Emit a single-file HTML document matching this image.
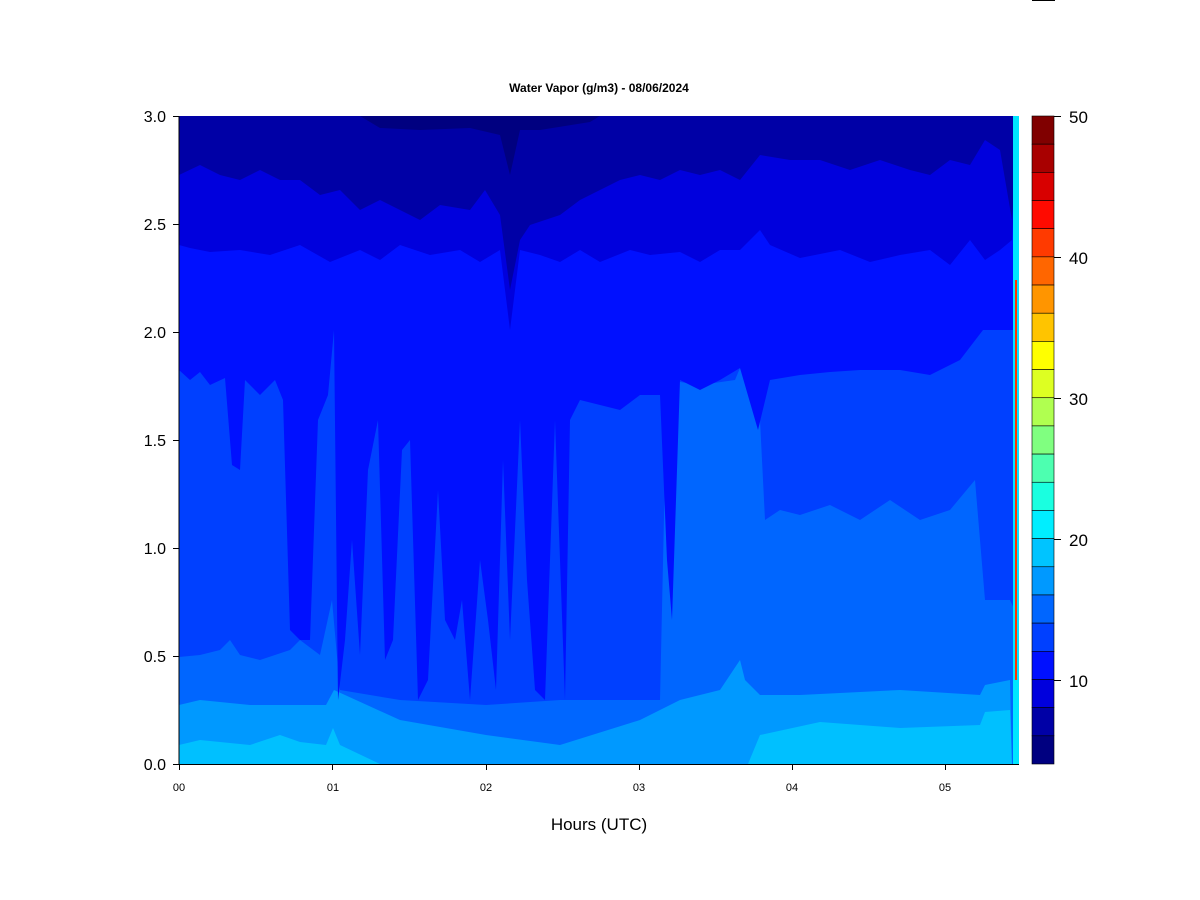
<!DOCTYPE html>
<html><head><style>
body{margin:0;background:#fff;width:1200px;height:900px;overflow:hidden}
svg{position:absolute;left:0;top:0}
</style></head><body>
<svg width="1200" height="900" xmlns="http://www.w3.org/2000/svg" font-family="Liberation Sans, sans-serif">
<rect x="1032" y="0" width="23" height="1" fill="#000"/>
<text x="599" y="92" text-anchor="middle" font-size="12" font-weight="bold">Water Vapor (g/m3) - 08/06/2024</text>
<clipPath id="c"><rect x="179" y="116" width="840" height="648"/></clipPath>
<g clip-path="url(#c)">
<rect x="179" y="116" width="840" height="648" fill="#00C0FF"/>
<polygon fill="#0099FF" points="179,116 1019,116 1019,764 1012,764 1010,710 985,712 980,725 900,728 820,722 760,735 748,764 380,764 340,745 333,728 326,745 300,742 280,735 250,745 200,740 179,745"/>
<polygon fill="#0066FF" points="179,116 1019,116 1019,764 1012,764 1010,680 985,685 980,695 900,690 800,695 760,695 745,680 740,660 720,690 680,700 640,720 560,745 486,735 400,720 345,695 334,690 326,705 250,705 200,700 179,705"/>
<polygon fill="#0040FF" points="179,116 1019,116 1019,620 1010,600 985,600 975,480 950,510 920,520 890,500 860,520 830,505 800,515 780,510 765,520 758,380 745,380 740,368 735,380 700,385 667,380 660,700 600,700 560,700 486,705 400,700 340,690 332,600 320,655 300,640 290,650 260,660 240,655 230,640 220,650 200,655 179,657"/>
<polygon fill="#0010FF" points="179,116 1019,116 1019,330 983,330 960,360 930,375 900,370 860,370 830,372 800,375 770,380 758,430 740,368 720,380 700,390 680,380 672,620 667,560 660,395 640,395 620,410 600,405 580,400 570,420 565,700 555,420 545,700 535,690 527,580 520,420 510,640 503,460 496,690 488,620 480,560 470,700 462,600 455,640 445,620 438,490 428,680 418,700 410,440 402,450 393,640 385,660 378,420 368,470 360,655 352,540 345,640 338,700 334,330 328,395 318,420 310,640 300,640 290,630 283,400 275,380 260,395 245,380 240,470 232,465 225,378 210,385 200,372 190,380 179,370"/>
<polygon fill="#0000DD" points="179,116 1019,116 1012,240 1000,250 985,260 970,240 950,265 930,250 900,255 870,262 840,250 800,258 770,245 760,230 740,250 720,250 700,262 680,252 650,255 630,250 600,262 580,250 560,262 540,255 520,250 510,330 500,250 480,262 460,250 430,255 400,245 380,260 360,250 330,262 300,245 270,255 240,250 210,252 190,248 179,245"/>
<polygon fill="#0000A6" points="179,116 1019,116 1012,220 1000,150 985,140 970,165 950,160 930,175 910,170 880,160 850,170 820,160 790,160 760,155 740,180 720,170 700,175 680,170 660,180 640,175 620,180 600,190 580,200 560,215 530,225 520,240 510,290 500,215 485,190 470,210 440,205 420,220 400,210 380,200 360,210 340,190 320,195 300,180 280,180 260,170 240,180 220,175 200,165 179,175"/>
<polygon fill="#000080" points="360,116 600,116 590,122 540,130 520,130 510,175 500,135 470,128 420,130 380,128"/>
<rect x="1013" y="116" width="6" height="648" fill="#00E6FF"/>
<rect x="1015" y="280" width="2" height="400" fill="#FF3300"/>
</g>
<g stroke="#000" stroke-width="1">
<line x1="179" y1="116" x2="179" y2="765"/>
<line x1="179" y1="764.5" x2="1019" y2="764.5"/>
<line x1="173" y1="116.5" x2="179" y2="116.5"/><line x1="173" y1="224.5" x2="179" y2="224.5"/><line x1="173" y1="332.5" x2="179" y2="332.5"/><line x1="173" y1="440.5" x2="179" y2="440.5"/><line x1="173" y1="548.5" x2="179" y2="548.5"/><line x1="173" y1="656.5" x2="179" y2="656.5"/><line x1="173" y1="764.5" x2="179" y2="764.5"/>
<line x1="179.5" y1="764" x2="179.5" y2="770"/><line x1="332.5" y1="764" x2="332.5" y2="770"/><line x1="486.5" y1="764" x2="486.5" y2="770"/><line x1="639.5" y1="764" x2="639.5" y2="770"/><line x1="792.5" y1="764" x2="792.5" y2="770"/><line x1="945.5" y1="764" x2="945.5" y2="770"/>
<line x1="1054" y1="116.5" x2="1061" y2="116.5"/><line x1="1054" y1="257.5" x2="1061" y2="257.5"/><line x1="1054" y1="398.5" x2="1061" y2="398.5"/><line x1="1054" y1="539.5" x2="1061" y2="539.5"/><line x1="1054" y1="680.5" x2="1061" y2="680.5"/>
</g>
<g font-size="16" text-anchor="end">
<text x="166" y="122">3.0</text><text x="166" y="230">2.5</text><text x="166" y="338">2.0</text><text x="166" y="446">1.5</text><text x="166" y="554">1.0</text><text x="166" y="662">0.5</text><text x="166" y="770">0.0</text>
</g>
<g font-size="17">
<text x="1069" y="123">50</text><text x="1069" y="264">40</text><text x="1069" y="405">30</text><text x="1069" y="546">20</text><text x="1069" y="687">10</text>
</g>
<g font-size="11" text-anchor="middle">
<text x="179" y="791">00</text><text x="333" y="791">01</text><text x="486" y="791">02</text><text x="639" y="791">03</text><text x="792" y="791">04</text><text x="945" y="791">05</text>
</g>
<text x="599" y="830" text-anchor="middle" font-size="17">Hours (UTC)</text>
<g stroke="#000" stroke-width="0.6">
<rect x="1032" y="116" width="22" height="28.17" fill="#800000"/>
<rect x="1032" y="144.17" width="22" height="28.17" fill="#A80000"/>
<rect x="1032" y="172.35" width="22" height="28.17" fill="#D80000"/>
<rect x="1032" y="200.52" width="22" height="28.17" fill="#FF0A00"/>
<rect x="1032" y="228.7" width="22" height="28.17" fill="#FF3A00"/>
<rect x="1032" y="256.87" width="22" height="28.17" fill="#FF6600"/>
<rect x="1032" y="285.04" width="22" height="28.17" fill="#FF9500"/>
<rect x="1032" y="313.22" width="22" height="28.17" fill="#FFC400"/>
<rect x="1032" y="341.39" width="22" height="28.17" fill="#FFFF00"/>
<rect x="1032" y="369.57" width="22" height="28.17" fill="#DDFF22"/>
<rect x="1032" y="397.74" width="22" height="28.17" fill="#B0FF50"/>
<rect x="1032" y="425.91" width="22" height="28.17" fill="#80FF80"/>
<rect x="1032" y="454.09" width="22" height="28.17" fill="#4DFFB0"/>
<rect x="1032" y="482.26" width="22" height="28.17" fill="#1AFFE0"/>
<rect x="1032" y="510.43" width="22" height="28.17" fill="#00EEFF"/>
<rect x="1032" y="538.61" width="22" height="28.17" fill="#00C4FF"/>
<rect x="1032" y="566.78" width="22" height="28.17" fill="#0099FF"/>
<rect x="1032" y="594.96" width="22" height="28.17" fill="#0066FF"/>
<rect x="1032" y="623.13" width="22" height="28.17" fill="#0040FF"/>
<rect x="1032" y="651.3" width="22" height="28.17" fill="#0010FF"/>
<rect x="1032" y="679.48" width="22" height="28.17" fill="#0000DD"/>
<rect x="1032" y="707.65" width="22" height="28.17" fill="#0000A6"/>
<rect x="1032" y="735.83" width="22" height="28.17" fill="#000080"/>
</g>
</svg>
</body></html>
